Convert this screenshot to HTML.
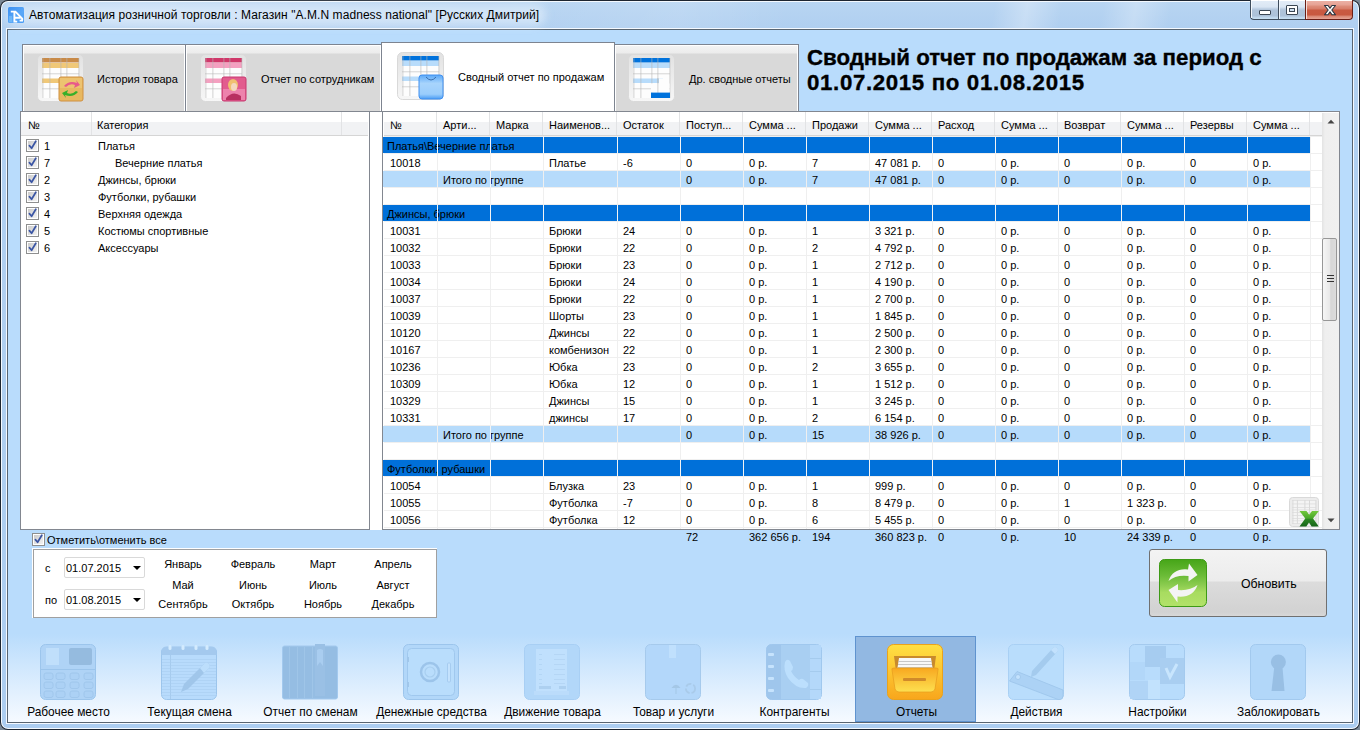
<!DOCTYPE html><html><head><meta charset="utf-8"><style>

*{margin:0;padding:0;box-sizing:border-box}
html,body{width:1360px;height:730px;overflow:hidden;background:#7a8896;font-family:"Liberation Sans", sans-serif;font-size:11px;color:#000}
.abs{position:absolute}
.t{position:absolute;white-space:nowrap;line-height:13px}
.tab{position:absolute;top:44px;height:68px;border:1px solid #7d8490;box-shadow:inset 1px 1px 0 #fff,inset -1px 0 0 #fff;background:linear-gradient(#f4f4f4 0,#ececec 8px,#d9d9d9 9px,#d9d9d9 100%)}
.tab.sel{top:42px;height:70px;background:#fff;box-shadow:none}
.tab .lbl{position:absolute;white-space:nowrap;font-size:11px;line-height:13px}
.ico{position:absolute;width:47px;height:48px}
.panel{position:absolute;background:#fff;border:1px solid #828790}
.hdr{position:absolute;height:24px;background:linear-gradient(#fff 0,#fff 10px,#f1f2f4 10px,#f1f2f4 100%);border-bottom:1px solid #d5d5d5}
.hsep{position:absolute;top:0px;width:1px;height:23px;background:#e2e3e5}
.cb{position:absolute;width:13px;height:13px}
.row{position:absolute;height:16px}
.cell{position:absolute;top:0;height:16px;line-height:18px;white-space:nowrap}
.gl{position:absolute;height:1px;background:#efefef}
.vl{position:absolute;width:1px;background:#efefef}
.tb{position:absolute;top:636px;width:121px;height:86px}
.tb .ic{position:absolute;left:32px;top:8px;width:56px;height:56px}
.tb .lb{position:absolute;left:0;width:121px;top:70px;text-align:center;white-space:nowrap;font-size:11.9px;line-height:13px}

</style></head><body>
<div class="abs" style="left:0;top:0;width:1360px;height:730px;border-radius:8px;background:#1d2530"></div>
<div class="abs" style="left:1px;top:1px;width:1358px;height:728px;border-radius:7px;background:#f4f9fe"></div>
<div class="abs" style="left:2px;top:2px;width:1356px;height:726px;border-radius:6px;background:linear-gradient(#b8d5f2,#b0cff0 26px,#b2d1f1 28px,#accdf0)"></div>
<div class="abs" style="left:6px;top:28px;width:1348px;height:696px;background:#f4f9ff"></div>
<div class="abs" style="left:7px;top:29px;width:1346px;height:694px;border:1px solid #586470;background:#b9dcfc"></div>
<div class="abs" style="left:2px;top:2px;width:1356px;height:26px;border-radius:6px 6px 0 0;background:linear-gradient(100deg,rgba(255,255,255,0) 0,rgba(255,255,255,.15) 10%,rgba(255,255,255,0) 35%,rgba(255,255,255,.12) 50%,rgba(255,255,255,0) 58%,rgba(255,255,255,0) 73%,rgba(255,255,255,.28) 75.4%,rgba(255,255,255,0) 78%,rgba(255,255,255,0) 81%,rgba(255,255,255,.25) 83.4%,rgba(255,255,255,0) 86%)"></div>
<div class="abs" style="left:6px;top:4px;width:540px;height:22px;border-radius:11px;background:rgba(228,240,252,.6);filter:blur(4px)"></div>
<div class="abs" style="left:8px;top:7px;width:16px;height:16px"><svg width="16" height="16" viewBox="0 0 16 16" style="position:absolute;left:0;top:0;"><defs><linearGradient id="apg" x1="0" y1="0" x2="1" y2="1"><stop offset="0" stop-color="#3c90f2"/><stop offset=".6" stop-color="#5aa8f8"/><stop offset="1" stop-color="#4a9cf4"/></linearGradient></defs><rect x="0" y="0" width="16" height="16" rx="1.5" fill="url(#apg)"/><rect x="1" y="9" width="3" height="6" fill="#7cc4fa" opacity=".6"/><path d="M2.8,4.6 H7.4 L14.2,11.6 V13.4 M6.4,4.8 V14.6 H9.2 M7.2,10.8 H12.6 M11.6,13.6 H15" fill="none" stroke="#fff" stroke-width="1.9" stroke-linejoin="miter"/></svg></div>
<div class="t" style="left:29px;top:8px;font-size:12px;line-height:14px;color:#000;letter-spacing:0.07px">Автоматизация розничной торговли : Магазин "A.M.N madness national" [Русских Дмитрий]</div>
<div class="abs" style="left:1250px;top:0px;width:56px;height:20px;border:1px solid #3f4d5c;border-top:none;border-right:none;border-radius:0 0 0 4px;background:linear-gradient(#ffffff 0,#ffffff 1px,#e2ecf7 1px,#dae6f3 7px,#c8d8ea 8px,#b0c4da 10px,#adc2d9 16px,#bcd4ea 17px,#c8e0f2 19px)"></div>
<div class="abs" style="left:1278px;top:0;width:1px;height:19px;background:#3f4d5c"></div>
<div class="abs" style="left:1279px;top:1px;width:1px;height:18px;background:#eef5fc"></div>
<div class="abs" style="left:1251px;top:1px;width:1px;height:17px;background:#f4f8fc"></div>
<div class="abs" style="left:1259px;top:10px;width:12px;height:5px;border:1px solid #3b4754;background:#fff;border-radius:1px"></div>
<div class="abs" style="left:1286px;top:5px;width:12px;height:10px;border:1px solid #3b4754;background:#fff;border-radius:1px"></div>
<div class="abs" style="left:1289px;top:8px;width:6px;height:4px;border:1px solid #3b4754;background:#cfe0f0"></div>
<div class="abs" style="left:1305px;top:0px;width:48px;height:20px;border:1px solid #6a1e16;border-top:none;border-radius:0 0 4px 0;background:linear-gradient(#ffffff 0,#ffffff 1px,#ecb0a4 1px,#e6a294 5px,#de8e7c 6px,#d77c68 9px,#c95a42 10px,#c85840 15px,#d88470 16px,#e6a496 19px)"></div>
<div class="abs" style="left:1306px;top:1px;width:1px;height:18px;background:#f6e0da"></div>
<div class="abs" style="left:1322px;top:3px;width:16px;height:14px"><svg width="16" height="14" viewBox="0 0 16 14" style="position:absolute;left:0;top:0;"><path d="M2.5,2.5 H6 L8,5.3 L10,2.5 H13.5 L9.8,7 L13.5,11.8 H10 L8,8.9 L6,11.8 H2.5 L6.2,7 Z" fill="#fff" stroke="#2a3642" stroke-width="1.1" stroke-linejoin="round"/></svg></div>
<div class="tab" style="left:22px;width:164px">
<div class="ico" style="left:14px;top:9px"><svg width="47" height="48" viewBox="0 0 47 48" style="position:absolute;left:0;top:0;"><defs><linearGradient id="tgc88a48" x1="0" y1="0" x2="0" y2="1"><stop offset="0" stop-color="#e2e2e2"/><stop offset="1" stop-color="#f7f7f7"/></linearGradient></defs><rect x="0.5" y="0.5" width="46" height="47" rx="5" fill="url(#tgc88a48)" stroke="#d9d9d9"/><rect x="5" y="4" width="37" height="40" fill="#fdfdfd"/><rect x="5" y="4" width="37" height="4.5" fill="#c88a48"/><rect x="5" y="9" width="37" height="5" fill="#f0c878"/><rect x="5" y="24.5" width="30" height="4.5" fill="#f0c878"/><rect x="5" y="19.5" width="37" height="0.7" fill="#c4c4c4"/><rect x="5" y="34.5" width="37" height="0.7" fill="#c4c4c4"/><rect x="5.5" y="4" width="0.8" height="40" fill="#b4b4b4" opacity="0.75"/><rect x="12.5" y="4" width="0.8" height="40" fill="#b4b4b4" opacity="0.75"/><rect x="23.5" y="4" width="0.8" height="40" fill="#b4b4b4" opacity="0.75"/><rect x="29.5" y="4" width="0.8" height="40" fill="#b4b4b4" opacity="0.75"/><rect x="41.5" y="4" width="0.8" height="40" fill="#b4b4b4" opacity="0.75"/><rect x="22" y="23" width="24" height="24" rx="2" fill="#e8b860" stroke="#d09040"/><rect x="23" y="24" width="22" height="10" fill="#f0c878" opacity=".7"/><path d="M27,32 Q32,26 40,29 L39,26 L43,31 L37,34 L38,31 Q33,29 29,33 Z" fill="#e85a8a"/><path d="M41,38 Q36,44 28,41 L29,44 L25,39 L31,36 L30,39 Q35,41 39,37 Z" fill="#38b02a"/></svg></div>
<div class="lbl" style="left:74px;top:28px">История товара</div>
</div>
<div class="tab" style="left:185px;width:197px">
<div class="ico" style="left:14px;top:9px"><svg width="47" height="48" viewBox="0 0 47 48" style="position:absolute;left:0;top:0;"><defs><linearGradient id="tgd0386a" x1="0" y1="0" x2="0" y2="1"><stop offset="0" stop-color="#e2e2e2"/><stop offset="1" stop-color="#f7f7f7"/></linearGradient></defs><rect x="0.5" y="0.5" width="46" height="47" rx="5" fill="url(#tgd0386a)" stroke="#d9d9d9"/><rect x="5" y="4" width="37" height="40" fill="#fdfdfd"/><rect x="5" y="4" width="37" height="4.5" fill="#d0386a"/><rect x="5" y="9" width="37" height="5" fill="#f4a0c0"/><rect x="5" y="24.5" width="30" height="4.5" fill="#f4a0c0"/><rect x="5" y="19.5" width="37" height="0.7" fill="#c4c4c4"/><rect x="5" y="34.5" width="37" height="0.7" fill="#c4c4c4"/><rect x="5.5" y="4" width="0.8" height="40" fill="#b4b4b4" opacity="0.75"/><rect x="12.5" y="4" width="0.8" height="40" fill="#b4b4b4" opacity="0.75"/><rect x="23.5" y="4" width="0.8" height="40" fill="#b4b4b4" opacity="0.75"/><rect x="29.5" y="4" width="0.8" height="40" fill="#b4b4b4" opacity="0.75"/><rect x="41.5" y="4" width="0.8" height="40" fill="#b4b4b4" opacity="0.75"/><rect x="22" y="23" width="24" height="24" rx="2" fill="#e25c8e" stroke="#c83870"/><rect x="23" y="35" width="22" height="11" fill="#f08cb4" opacity=".8"/><ellipse cx="33" cy="31" rx="5" ry="6" fill="#f0c070"/><ellipse cx="34" cy="33" rx="3" ry="4" fill="#f4d8c0"/><path d="M26,44 Q33,36 41,42 L41,46 L26,46 Z" fill="#b83060"/></svg></div>
<div class="lbl" style="left:75px;top:28px">Отчет по сотрудникам</div>
</div>
<div class="tab" style="left:614px;width:185px">
<div class="ico" style="left:13px;top:9px"><svg width="47" height="48" viewBox="0 0 47 48" style="position:absolute;left:0;top:0;"><defs><linearGradient id="tg0072dc" x1="0" y1="0" x2="0" y2="1"><stop offset="0" stop-color="#e2e2e2"/><stop offset="1" stop-color="#f7f7f7"/></linearGradient></defs><rect x="0.5" y="0.5" width="46" height="47" rx="5" fill="url(#tg0072dc)" stroke="#d9d9d9"/><rect x="5" y="4" width="37" height="40" fill="#fdfdfd"/><rect x="5" y="4" width="37" height="4.5" fill="#0072dc"/><rect x="5" y="9" width="37" height="5" fill="#b8dcfb"/><rect x="5" y="24.5" width="30" height="4.5" fill="#b8dcfb"/><rect x="5" y="19.5" width="37" height="0.7" fill="#c4c4c4"/><rect x="5" y="34.5" width="37" height="0.7" fill="#c4c4c4"/><rect x="5.5" y="4" width="0.8" height="40" fill="#b4b4b4" opacity="0.75"/><rect x="12.5" y="4" width="0.8" height="40" fill="#b4b4b4" opacity="0.75"/><rect x="23.5" y="4" width="0.8" height="40" fill="#b4b4b4" opacity="0.75"/><rect x="29.5" y="4" width="0.8" height="40" fill="#b4b4b4" opacity="0.75"/><rect x="41.5" y="4" width="0.8" height="40" fill="#b4b4b4" opacity="0.75"/><rect x="31" y="24.5" width="4" height="4.5" fill="#fdfdfd"/><rect x="29.5" y="24" width=".8" height="6" fill="#b4b4b4" opacity=".75"/><rect x="23" y="29.5" width="18.5" height="9" fill="#fdfdfd"/><rect x="29.5" y="29.5" width=".8" height="9" fill="#b4b4b4" opacity=".75"/><rect x="23" y="38.6" width="19" height="5.4" fill="#0072dc"/></svg></div>
<div class="lbl" style="left:74px;top:28px">Др. сводные отчеты</div>
</div>
<div class="tab sel" style="left:381px;width:234px">
<div class="ico" style="left:15px;top:9px"><svg width="47" height="48" viewBox="0 0 47 48" style="position:absolute;left:0;top:0;"><defs><linearGradient id="tg0072dc" x1="0" y1="0" x2="0" y2="1"><stop offset="0" stop-color="#e2e2e2"/><stop offset="1" stop-color="#f7f7f7"/></linearGradient></defs><rect x="0.5" y="0.5" width="46" height="47" rx="5" fill="url(#tg0072dc)" stroke="#d9d9d9"/><rect x="5" y="4" width="37" height="40" fill="#fdfdfd"/><rect x="5" y="4" width="37" height="4.5" fill="#0072dc"/><rect x="5" y="9" width="37" height="5" fill="#b8dcfb"/><rect x="5" y="24.5" width="30" height="4.5" fill="#b8dcfb"/><rect x="5" y="19.5" width="37" height="0.7" fill="#c4c4c4"/><rect x="5" y="34.5" width="37" height="0.7" fill="#c4c4c4"/><rect x="5.5" y="4" width="0.8" height="40" fill="#b4b4b4" opacity="0.75"/><rect x="12.5" y="4" width="0.8" height="40" fill="#b4b4b4" opacity="0.75"/><rect x="23.5" y="4" width="0.8" height="40" fill="#b4b4b4" opacity="0.75"/><rect x="29.5" y="4" width="0.8" height="40" fill="#b4b4b4" opacity="0.75"/><rect x="41.5" y="4" width="0.8" height="40" fill="#b4b4b4" opacity="0.75"/><defs><linearGradient id="bg1" x1="0" y1="0" x2="0" y2="1"><stop offset="0" stop-color="#5aa8f8"/><stop offset=".35" stop-color="#a8d4fc"/><stop offset=".8" stop-color="#9acdfc"/><stop offset="1" stop-color="#4a9cf4"/></linearGradient></defs><rect x="22" y="23" width="24" height="24" rx="3" fill="url(#bg1)" stroke="#4090f0"/><path d="M29,25 Q34,31 39,25" fill="none" stroke="#2a5c9c" stroke-width="0.8"/></svg></div>
<div class="lbl" style="left:76px;top:28px">Сводный отчет по продажам</div>
</div>
<div class="t" style="left:807px;top:45px;font-size:22.25px;font-weight:bold;line-height:25px;-webkit-text-stroke:0.35px #000">Сводный отчет по продажам за период с<br><span style="letter-spacing:0.65px">01.07.2015 по 01.08.2015</span></div>
<div class="panel" style="left:20px;top:111px;width:350px;height:419px">
<div class="hdr" style="left:0;top:0;width:347px"></div>
<div class="hsep" style="left:70px"></div><div class="hsep" style="left:320px"></div>
<div class="t" style="left:7px;top:7px">№</div><div class="t" style="left:76px;top:7px">Категория</div>
<div class="cb" style="left:5px;top:27px"><svg width="13" height="13" viewBox="0 0 13 13" style="position:absolute;left:0;top:0;"><rect x="0.5" y="0.5" width="12" height="12" fill="#fff" stroke="#8e8f8f"/><defs><linearGradient id="cbg" x1="0" y1="0" x2="1" y2="1"><stop offset="0" stop-color="#cbcbcb"/><stop offset="1" stop-color="#f3f3f3"/></linearGradient></defs><rect x="2" y="2" width="9" height="9" fill="url(#cbg)"/><path d="M3.4,6.6 L5.6,9.3 L9.8,2.2" fill="none" stroke="#3a55a4" stroke-width="1.7" stroke-linejoin="round" stroke-linecap="round"/></svg></div>
<div class="t" style="left:23px;top:28px">1</div>
<div class="t" style="left:77px;top:28px">Платья</div>
<div class="cb" style="left:5px;top:44px"><svg width="13" height="13" viewBox="0 0 13 13" style="position:absolute;left:0;top:0;"><rect x="0.5" y="0.5" width="12" height="12" fill="#fff" stroke="#8e8f8f"/><defs><linearGradient id="cbg" x1="0" y1="0" x2="1" y2="1"><stop offset="0" stop-color="#cbcbcb"/><stop offset="1" stop-color="#f3f3f3"/></linearGradient></defs><rect x="2" y="2" width="9" height="9" fill="url(#cbg)"/><path d="M3.4,6.6 L5.6,9.3 L9.8,2.2" fill="none" stroke="#3a55a4" stroke-width="1.7" stroke-linejoin="round" stroke-linecap="round"/></svg></div>
<div class="t" style="left:23px;top:45px">7</div>
<div class="t" style="left:94px;top:45px">Вечерние платья</div>
<div class="cb" style="left:5px;top:61px"><svg width="13" height="13" viewBox="0 0 13 13" style="position:absolute;left:0;top:0;"><rect x="0.5" y="0.5" width="12" height="12" fill="#fff" stroke="#8e8f8f"/><defs><linearGradient id="cbg" x1="0" y1="0" x2="1" y2="1"><stop offset="0" stop-color="#cbcbcb"/><stop offset="1" stop-color="#f3f3f3"/></linearGradient></defs><rect x="2" y="2" width="9" height="9" fill="url(#cbg)"/><path d="M3.4,6.6 L5.6,9.3 L9.8,2.2" fill="none" stroke="#3a55a4" stroke-width="1.7" stroke-linejoin="round" stroke-linecap="round"/></svg></div>
<div class="t" style="left:23px;top:62px">2</div>
<div class="t" style="left:77px;top:62px">Джинсы, брюки</div>
<div class="cb" style="left:5px;top:78px"><svg width="13" height="13" viewBox="0 0 13 13" style="position:absolute;left:0;top:0;"><rect x="0.5" y="0.5" width="12" height="12" fill="#fff" stroke="#8e8f8f"/><defs><linearGradient id="cbg" x1="0" y1="0" x2="1" y2="1"><stop offset="0" stop-color="#cbcbcb"/><stop offset="1" stop-color="#f3f3f3"/></linearGradient></defs><rect x="2" y="2" width="9" height="9" fill="url(#cbg)"/><path d="M3.4,6.6 L5.6,9.3 L9.8,2.2" fill="none" stroke="#3a55a4" stroke-width="1.7" stroke-linejoin="round" stroke-linecap="round"/></svg></div>
<div class="t" style="left:23px;top:79px">3</div>
<div class="t" style="left:77px;top:79px">Футболки, рубашки</div>
<div class="cb" style="left:5px;top:95px"><svg width="13" height="13" viewBox="0 0 13 13" style="position:absolute;left:0;top:0;"><rect x="0.5" y="0.5" width="12" height="12" fill="#fff" stroke="#8e8f8f"/><defs><linearGradient id="cbg" x1="0" y1="0" x2="1" y2="1"><stop offset="0" stop-color="#cbcbcb"/><stop offset="1" stop-color="#f3f3f3"/></linearGradient></defs><rect x="2" y="2" width="9" height="9" fill="url(#cbg)"/><path d="M3.4,6.6 L5.6,9.3 L9.8,2.2" fill="none" stroke="#3a55a4" stroke-width="1.7" stroke-linejoin="round" stroke-linecap="round"/></svg></div>
<div class="t" style="left:23px;top:96px">4</div>
<div class="t" style="left:77px;top:96px">Верхняя одежда</div>
<div class="cb" style="left:5px;top:112px"><svg width="13" height="13" viewBox="0 0 13 13" style="position:absolute;left:0;top:0;"><rect x="0.5" y="0.5" width="12" height="12" fill="#fff" stroke="#8e8f8f"/><defs><linearGradient id="cbg" x1="0" y1="0" x2="1" y2="1"><stop offset="0" stop-color="#cbcbcb"/><stop offset="1" stop-color="#f3f3f3"/></linearGradient></defs><rect x="2" y="2" width="9" height="9" fill="url(#cbg)"/><path d="M3.4,6.6 L5.6,9.3 L9.8,2.2" fill="none" stroke="#3a55a4" stroke-width="1.7" stroke-linejoin="round" stroke-linecap="round"/></svg></div>
<div class="t" style="left:23px;top:113px">5</div>
<div class="t" style="left:77px;top:113px">Костюмы спортивные</div>
<div class="cb" style="left:5px;top:129px"><svg width="13" height="13" viewBox="0 0 13 13" style="position:absolute;left:0;top:0;"><rect x="0.5" y="0.5" width="12" height="12" fill="#fff" stroke="#8e8f8f"/><defs><linearGradient id="cbg" x1="0" y1="0" x2="1" y2="1"><stop offset="0" stop-color="#cbcbcb"/><stop offset="1" stop-color="#f3f3f3"/></linearGradient></defs><rect x="2" y="2" width="9" height="9" fill="url(#cbg)"/><path d="M3.4,6.6 L5.6,9.3 L9.8,2.2" fill="none" stroke="#3a55a4" stroke-width="1.7" stroke-linejoin="round" stroke-linecap="round"/></svg></div>
<div class="t" style="left:23px;top:130px">6</div>
<div class="t" style="left:77px;top:130px">Аксессуары</div>
</div>
<div class="abs" style="left:370px;top:111px;width:12px;height:419px;background:#fff;border-top:1px solid #828790"></div>
<div class="panel" style="left:382px;top:111px;width:958px;height:419px;overflow:hidden">
<div class="hdr" style="left:1px;top:0;width:938px"></div>
<div class="hsep" style="left:53px"></div>
<div class="hsep" style="left:106px"></div>
<div class="hsep" style="left:159px"></div>
<div class="hsep" style="left:233px"></div>
<div class="hsep" style="left:296px"></div>
<div class="hsep" style="left:359px"></div>
<div class="hsep" style="left:422px"></div>
<div class="hsep" style="left:485px"></div>
<div class="hsep" style="left:548px"></div>
<div class="hsep" style="left:611px"></div>
<div class="hsep" style="left:674px"></div>
<div class="hsep" style="left:737px"></div>
<div class="hsep" style="left:800px"></div>
<div class="hsep" style="left:863px"></div>
<div class="hsep" style="left:926px"></div>
<div class="t" style="left:7px;top:7px">№</div>
<div class="t" style="left:60px;top:7px">Арти...</div>
<div class="t" style="left:113px;top:7px">Марка</div>
<div class="t" style="left:166px;top:7px">Наименов...</div>
<div class="t" style="left:240px;top:7px">Остаток</div>
<div class="t" style="left:303px;top:7px">Поступ...</div>
<div class="t" style="left:366px;top:7px">Сумма ...</div>
<div class="t" style="left:429px;top:7px">Продажи</div>
<div class="t" style="left:492px;top:7px">Сумма ...</div>
<div class="t" style="left:555px;top:7px">Расход</div>
<div class="t" style="left:618px;top:7px">Сумма ...</div>
<div class="t" style="left:681px;top:7px">Возврат</div>
<div class="t" style="left:744px;top:7px">Сумма ...</div>
<div class="t" style="left:807px;top:7px">Резервы</div>
<div class="t" style="left:870px;top:7px">Сумма ...</div>
<div class="gl" style="left:1px;top:24px;width:938px"></div>
<div class="gl" style="left:1px;top:41px;width:938px"></div>
<div class="gl" style="left:1px;top:58px;width:938px"></div>
<div class="gl" style="left:1px;top:75px;width:938px"></div>
<div class="gl" style="left:1px;top:92px;width:938px"></div>
<div class="gl" style="left:1px;top:109px;width:938px"></div>
<div class="gl" style="left:1px;top:126px;width:938px"></div>
<div class="gl" style="left:1px;top:143px;width:938px"></div>
<div class="gl" style="left:1px;top:160px;width:938px"></div>
<div class="gl" style="left:1px;top:177px;width:938px"></div>
<div class="gl" style="left:1px;top:194px;width:938px"></div>
<div class="gl" style="left:1px;top:211px;width:938px"></div>
<div class="gl" style="left:1px;top:228px;width:938px"></div>
<div class="gl" style="left:1px;top:245px;width:938px"></div>
<div class="gl" style="left:1px;top:262px;width:938px"></div>
<div class="gl" style="left:1px;top:279px;width:938px"></div>
<div class="gl" style="left:1px;top:296px;width:938px"></div>
<div class="gl" style="left:1px;top:313px;width:938px"></div>
<div class="gl" style="left:1px;top:330px;width:938px"></div>
<div class="gl" style="left:1px;top:347px;width:938px"></div>
<div class="gl" style="left:1px;top:364px;width:938px"></div>
<div class="gl" style="left:1px;top:381px;width:938px"></div>
<div class="gl" style="left:1px;top:398px;width:938px"></div>
<div class="gl" style="left:1px;top:415px;width:938px"></div>
<div class="vl" style="left:54px;top:24px;height:400px"></div>
<div class="vl" style="left:107px;top:24px;height:400px"></div>
<div class="vl" style="left:160px;top:24px;height:400px"></div>
<div class="vl" style="left:234px;top:24px;height:400px"></div>
<div class="vl" style="left:297px;top:24px;height:400px"></div>
<div class="vl" style="left:360px;top:24px;height:400px"></div>
<div class="vl" style="left:423px;top:24px;height:400px"></div>
<div class="vl" style="left:486px;top:24px;height:400px"></div>
<div class="vl" style="left:549px;top:24px;height:400px"></div>
<div class="vl" style="left:612px;top:24px;height:400px"></div>
<div class="vl" style="left:675px;top:24px;height:400px"></div>
<div class="vl" style="left:738px;top:24px;height:400px"></div>
<div class="vl" style="left:801px;top:24px;height:400px"></div>
<div class="vl" style="left:864px;top:24px;height:400px"></div>
<div class="vl" style="left:927px;top:24px;height:400px"></div>
<div class="row" style="left:0px;top:25px;width:54px;background:#0070d9"></div>
<div class="row" style="left:55px;top:25px;width:52px;background:#0070d9"></div>
<div class="row" style="left:108px;top:25px;width:52px;background:#0070d9"></div>
<div class="row" style="left:161px;top:25px;width:73px;background:#0070d9"></div>
<div class="row" style="left:235px;top:25px;width:62px;background:#0070d9"></div>
<div class="row" style="left:298px;top:25px;width:62px;background:#0070d9"></div>
<div class="row" style="left:361px;top:25px;width:62px;background:#0070d9"></div>
<div class="row" style="left:424px;top:25px;width:62px;background:#0070d9"></div>
<div class="row" style="left:487px;top:25px;width:62px;background:#0070d9"></div>
<div class="row" style="left:550px;top:25px;width:62px;background:#0070d9"></div>
<div class="row" style="left:613px;top:25px;width:62px;background:#0070d9"></div>
<div class="row" style="left:676px;top:25px;width:62px;background:#0070d9"></div>
<div class="row" style="left:739px;top:25px;width:62px;background:#0070d9"></div>
<div class="row" style="left:802px;top:25px;width:62px;background:#0070d9"></div>
<div class="row" style="left:865px;top:25px;width:62px;background:#0070d9"></div>
<div class="cell" style="left:4px;top:25px">Платья\Вечерние платья</div>
<div class="abs" style="left:54px;top:25px;width:1px;height:16px;background:#f4f4f4"></div>
<div class="abs" style="left:107px;top:25px;width:1px;height:16px;background:#f4f4f4"></div>
<div class="abs" style="left:160px;top:25px;width:1px;height:16px;background:#f4f4f4"></div>
<div class="abs" style="left:234px;top:25px;width:1px;height:16px;background:#f4f4f4"></div>
<div class="abs" style="left:297px;top:25px;width:1px;height:16px;background:#f4f4f4"></div>
<div class="abs" style="left:360px;top:25px;width:1px;height:16px;background:#f4f4f4"></div>
<div class="abs" style="left:423px;top:25px;width:1px;height:16px;background:#f4f4f4"></div>
<div class="abs" style="left:486px;top:25px;width:1px;height:16px;background:#f4f4f4"></div>
<div class="abs" style="left:549px;top:25px;width:1px;height:16px;background:#f4f4f4"></div>
<div class="abs" style="left:612px;top:25px;width:1px;height:16px;background:#f4f4f4"></div>
<div class="abs" style="left:675px;top:25px;width:1px;height:16px;background:#f4f4f4"></div>
<div class="abs" style="left:738px;top:25px;width:1px;height:16px;background:#f4f4f4"></div>
<div class="abs" style="left:801px;top:25px;width:1px;height:16px;background:#f4f4f4"></div>
<div class="abs" style="left:864px;top:25px;width:1px;height:16px;background:#f4f4f4"></div>
<div class="cell" style="left:7px;top:42px">10018</div>
<div class="cell" style="left:166px;top:42px">Платье</div>
<div class="cell" style="left:240px;top:42px">-6</div>
<div class="cell" style="left:303px;top:42px">0</div>
<div class="cell" style="left:366px;top:42px">0 р.</div>
<div class="cell" style="left:429px;top:42px">7</div>
<div class="cell" style="left:492px;top:42px">47 081 р.</div>
<div class="cell" style="left:555px;top:42px">0</div>
<div class="cell" style="left:618px;top:42px">0 р.</div>
<div class="cell" style="left:681px;top:42px">0</div>
<div class="cell" style="left:744px;top:42px">0 р.</div>
<div class="cell" style="left:807px;top:42px">0</div>
<div class="cell" style="left:870px;top:42px">0 р.</div>
<div class="row" style="left:0px;top:59px;width:54px;background:#b6dbfb"></div>
<div class="row" style="left:55px;top:59px;width:52px;background:#b6dbfb"></div>
<div class="row" style="left:108px;top:59px;width:52px;background:#b6dbfb"></div>
<div class="row" style="left:161px;top:59px;width:73px;background:#b6dbfb"></div>
<div class="row" style="left:235px;top:59px;width:62px;background:#b6dbfb"></div>
<div class="row" style="left:298px;top:59px;width:62px;background:#b6dbfb"></div>
<div class="row" style="left:361px;top:59px;width:62px;background:#b6dbfb"></div>
<div class="row" style="left:424px;top:59px;width:62px;background:#b6dbfb"></div>
<div class="row" style="left:487px;top:59px;width:62px;background:#b6dbfb"></div>
<div class="row" style="left:550px;top:59px;width:62px;background:#b6dbfb"></div>
<div class="row" style="left:613px;top:59px;width:62px;background:#b6dbfb"></div>
<div class="row" style="left:676px;top:59px;width:62px;background:#b6dbfb"></div>
<div class="row" style="left:739px;top:59px;width:62px;background:#b6dbfb"></div>
<div class="row" style="left:802px;top:59px;width:62px;background:#b6dbfb"></div>
<div class="row" style="left:865px;top:59px;width:62px;background:#b6dbfb"></div>
<div class="cell" style="left:60px;top:59px">Итого по группе</div>
<div class="cell" style="left:303px;top:59px">0</div>
<div class="cell" style="left:366px;top:59px">0 р.</div>
<div class="cell" style="left:429px;top:59px">7</div>
<div class="cell" style="left:492px;top:59px">47 081 р.</div>
<div class="cell" style="left:555px;top:59px">0</div>
<div class="cell" style="left:618px;top:59px">0 р.</div>
<div class="cell" style="left:681px;top:59px">0</div>
<div class="cell" style="left:744px;top:59px">0 р.</div>
<div class="cell" style="left:807px;top:59px">0</div>
<div class="cell" style="left:870px;top:59px">0 р.</div>
<div class="abs" style="left:107px;top:59px;width:1px;height:16px;background:#f4f4f4"></div>
<div class="row" style="left:0px;top:93px;width:54px;background:#0070d9"></div>
<div class="row" style="left:55px;top:93px;width:52px;background:#0070d9"></div>
<div class="row" style="left:108px;top:93px;width:52px;background:#0070d9"></div>
<div class="row" style="left:161px;top:93px;width:73px;background:#0070d9"></div>
<div class="row" style="left:235px;top:93px;width:62px;background:#0070d9"></div>
<div class="row" style="left:298px;top:93px;width:62px;background:#0070d9"></div>
<div class="row" style="left:361px;top:93px;width:62px;background:#0070d9"></div>
<div class="row" style="left:424px;top:93px;width:62px;background:#0070d9"></div>
<div class="row" style="left:487px;top:93px;width:62px;background:#0070d9"></div>
<div class="row" style="left:550px;top:93px;width:62px;background:#0070d9"></div>
<div class="row" style="left:613px;top:93px;width:62px;background:#0070d9"></div>
<div class="row" style="left:676px;top:93px;width:62px;background:#0070d9"></div>
<div class="row" style="left:739px;top:93px;width:62px;background:#0070d9"></div>
<div class="row" style="left:802px;top:93px;width:62px;background:#0070d9"></div>
<div class="row" style="left:865px;top:93px;width:62px;background:#0070d9"></div>
<div class="cell" style="left:4px;top:93px">Джинсы, брюки</div>
<div class="abs" style="left:54px;top:93px;width:1px;height:16px;background:#f4f4f4"></div>
<div class="abs" style="left:107px;top:93px;width:1px;height:16px;background:#f4f4f4"></div>
<div class="abs" style="left:160px;top:93px;width:1px;height:16px;background:#f4f4f4"></div>
<div class="abs" style="left:234px;top:93px;width:1px;height:16px;background:#f4f4f4"></div>
<div class="abs" style="left:297px;top:93px;width:1px;height:16px;background:#f4f4f4"></div>
<div class="abs" style="left:360px;top:93px;width:1px;height:16px;background:#f4f4f4"></div>
<div class="abs" style="left:423px;top:93px;width:1px;height:16px;background:#f4f4f4"></div>
<div class="abs" style="left:486px;top:93px;width:1px;height:16px;background:#f4f4f4"></div>
<div class="abs" style="left:549px;top:93px;width:1px;height:16px;background:#f4f4f4"></div>
<div class="abs" style="left:612px;top:93px;width:1px;height:16px;background:#f4f4f4"></div>
<div class="abs" style="left:675px;top:93px;width:1px;height:16px;background:#f4f4f4"></div>
<div class="abs" style="left:738px;top:93px;width:1px;height:16px;background:#f4f4f4"></div>
<div class="abs" style="left:801px;top:93px;width:1px;height:16px;background:#f4f4f4"></div>
<div class="abs" style="left:864px;top:93px;width:1px;height:16px;background:#f4f4f4"></div>
<div class="cell" style="left:7px;top:110px">10031</div>
<div class="cell" style="left:166px;top:110px">Брюки</div>
<div class="cell" style="left:240px;top:110px">24</div>
<div class="cell" style="left:303px;top:110px">0</div>
<div class="cell" style="left:366px;top:110px">0 р.</div>
<div class="cell" style="left:429px;top:110px">1</div>
<div class="cell" style="left:492px;top:110px">3 321 р.</div>
<div class="cell" style="left:555px;top:110px">0</div>
<div class="cell" style="left:618px;top:110px">0 р.</div>
<div class="cell" style="left:681px;top:110px">0</div>
<div class="cell" style="left:744px;top:110px">0 р.</div>
<div class="cell" style="left:807px;top:110px">0</div>
<div class="cell" style="left:870px;top:110px">0 р.</div>
<div class="cell" style="left:7px;top:127px">10032</div>
<div class="cell" style="left:166px;top:127px">Брюки</div>
<div class="cell" style="left:240px;top:127px">22</div>
<div class="cell" style="left:303px;top:127px">0</div>
<div class="cell" style="left:366px;top:127px">0 р.</div>
<div class="cell" style="left:429px;top:127px">2</div>
<div class="cell" style="left:492px;top:127px">4 792 р.</div>
<div class="cell" style="left:555px;top:127px">0</div>
<div class="cell" style="left:618px;top:127px">0 р.</div>
<div class="cell" style="left:681px;top:127px">0</div>
<div class="cell" style="left:744px;top:127px">0 р.</div>
<div class="cell" style="left:807px;top:127px">0</div>
<div class="cell" style="left:870px;top:127px">0 р.</div>
<div class="cell" style="left:7px;top:144px">10033</div>
<div class="cell" style="left:166px;top:144px">Брюки</div>
<div class="cell" style="left:240px;top:144px">23</div>
<div class="cell" style="left:303px;top:144px">0</div>
<div class="cell" style="left:366px;top:144px">0 р.</div>
<div class="cell" style="left:429px;top:144px">1</div>
<div class="cell" style="left:492px;top:144px">2 712 р.</div>
<div class="cell" style="left:555px;top:144px">0</div>
<div class="cell" style="left:618px;top:144px">0 р.</div>
<div class="cell" style="left:681px;top:144px">0</div>
<div class="cell" style="left:744px;top:144px">0 р.</div>
<div class="cell" style="left:807px;top:144px">0</div>
<div class="cell" style="left:870px;top:144px">0 р.</div>
<div class="cell" style="left:7px;top:161px">10034</div>
<div class="cell" style="left:166px;top:161px">Брюки</div>
<div class="cell" style="left:240px;top:161px">24</div>
<div class="cell" style="left:303px;top:161px">0</div>
<div class="cell" style="left:366px;top:161px">0 р.</div>
<div class="cell" style="left:429px;top:161px">1</div>
<div class="cell" style="left:492px;top:161px">4 190 р.</div>
<div class="cell" style="left:555px;top:161px">0</div>
<div class="cell" style="left:618px;top:161px">0 р.</div>
<div class="cell" style="left:681px;top:161px">0</div>
<div class="cell" style="left:744px;top:161px">0 р.</div>
<div class="cell" style="left:807px;top:161px">0</div>
<div class="cell" style="left:870px;top:161px">0 р.</div>
<div class="cell" style="left:7px;top:178px">10037</div>
<div class="cell" style="left:166px;top:178px">Брюки</div>
<div class="cell" style="left:240px;top:178px">22</div>
<div class="cell" style="left:303px;top:178px">0</div>
<div class="cell" style="left:366px;top:178px">0 р.</div>
<div class="cell" style="left:429px;top:178px">1</div>
<div class="cell" style="left:492px;top:178px">2 700 р.</div>
<div class="cell" style="left:555px;top:178px">0</div>
<div class="cell" style="left:618px;top:178px">0 р.</div>
<div class="cell" style="left:681px;top:178px">0</div>
<div class="cell" style="left:744px;top:178px">0 р.</div>
<div class="cell" style="left:807px;top:178px">0</div>
<div class="cell" style="left:870px;top:178px">0 р.</div>
<div class="cell" style="left:7px;top:195px">10039</div>
<div class="cell" style="left:166px;top:195px">Шорты</div>
<div class="cell" style="left:240px;top:195px">23</div>
<div class="cell" style="left:303px;top:195px">0</div>
<div class="cell" style="left:366px;top:195px">0 р.</div>
<div class="cell" style="left:429px;top:195px">1</div>
<div class="cell" style="left:492px;top:195px">1 845 р.</div>
<div class="cell" style="left:555px;top:195px">0</div>
<div class="cell" style="left:618px;top:195px">0 р.</div>
<div class="cell" style="left:681px;top:195px">0</div>
<div class="cell" style="left:744px;top:195px">0 р.</div>
<div class="cell" style="left:807px;top:195px">0</div>
<div class="cell" style="left:870px;top:195px">0 р.</div>
<div class="cell" style="left:7px;top:212px">10120</div>
<div class="cell" style="left:166px;top:212px">Джинсы</div>
<div class="cell" style="left:240px;top:212px">22</div>
<div class="cell" style="left:303px;top:212px">0</div>
<div class="cell" style="left:366px;top:212px">0 р.</div>
<div class="cell" style="left:429px;top:212px">1</div>
<div class="cell" style="left:492px;top:212px">2 500 р.</div>
<div class="cell" style="left:555px;top:212px">0</div>
<div class="cell" style="left:618px;top:212px">0 р.</div>
<div class="cell" style="left:681px;top:212px">0</div>
<div class="cell" style="left:744px;top:212px">0 р.</div>
<div class="cell" style="left:807px;top:212px">0</div>
<div class="cell" style="left:870px;top:212px">0 р.</div>
<div class="cell" style="left:7px;top:229px">10167</div>
<div class="cell" style="left:166px;top:229px">комбенизон</div>
<div class="cell" style="left:240px;top:229px">22</div>
<div class="cell" style="left:303px;top:229px">0</div>
<div class="cell" style="left:366px;top:229px">0 р.</div>
<div class="cell" style="left:429px;top:229px">1</div>
<div class="cell" style="left:492px;top:229px">2 300 р.</div>
<div class="cell" style="left:555px;top:229px">0</div>
<div class="cell" style="left:618px;top:229px">0 р.</div>
<div class="cell" style="left:681px;top:229px">0</div>
<div class="cell" style="left:744px;top:229px">0 р.</div>
<div class="cell" style="left:807px;top:229px">0</div>
<div class="cell" style="left:870px;top:229px">0 р.</div>
<div class="cell" style="left:7px;top:246px">10236</div>
<div class="cell" style="left:166px;top:246px">Юбка</div>
<div class="cell" style="left:240px;top:246px">23</div>
<div class="cell" style="left:303px;top:246px">0</div>
<div class="cell" style="left:366px;top:246px">0 р.</div>
<div class="cell" style="left:429px;top:246px">2</div>
<div class="cell" style="left:492px;top:246px">3 655 р.</div>
<div class="cell" style="left:555px;top:246px">0</div>
<div class="cell" style="left:618px;top:246px">0 р.</div>
<div class="cell" style="left:681px;top:246px">0</div>
<div class="cell" style="left:744px;top:246px">0 р.</div>
<div class="cell" style="left:807px;top:246px">0</div>
<div class="cell" style="left:870px;top:246px">0 р.</div>
<div class="cell" style="left:7px;top:263px">10309</div>
<div class="cell" style="left:166px;top:263px">Юбка</div>
<div class="cell" style="left:240px;top:263px">12</div>
<div class="cell" style="left:303px;top:263px">0</div>
<div class="cell" style="left:366px;top:263px">0 р.</div>
<div class="cell" style="left:429px;top:263px">1</div>
<div class="cell" style="left:492px;top:263px">1 512 р.</div>
<div class="cell" style="left:555px;top:263px">0</div>
<div class="cell" style="left:618px;top:263px">0 р.</div>
<div class="cell" style="left:681px;top:263px">0</div>
<div class="cell" style="left:744px;top:263px">0 р.</div>
<div class="cell" style="left:807px;top:263px">0</div>
<div class="cell" style="left:870px;top:263px">0 р.</div>
<div class="cell" style="left:7px;top:280px">10329</div>
<div class="cell" style="left:166px;top:280px">Джинсы</div>
<div class="cell" style="left:240px;top:280px">15</div>
<div class="cell" style="left:303px;top:280px">0</div>
<div class="cell" style="left:366px;top:280px">0 р.</div>
<div class="cell" style="left:429px;top:280px">1</div>
<div class="cell" style="left:492px;top:280px">3 245 р.</div>
<div class="cell" style="left:555px;top:280px">0</div>
<div class="cell" style="left:618px;top:280px">0 р.</div>
<div class="cell" style="left:681px;top:280px">0</div>
<div class="cell" style="left:744px;top:280px">0 р.</div>
<div class="cell" style="left:807px;top:280px">0</div>
<div class="cell" style="left:870px;top:280px">0 р.</div>
<div class="cell" style="left:7px;top:297px">10331</div>
<div class="cell" style="left:166px;top:297px">джинсы</div>
<div class="cell" style="left:240px;top:297px">17</div>
<div class="cell" style="left:303px;top:297px">0</div>
<div class="cell" style="left:366px;top:297px">0 р.</div>
<div class="cell" style="left:429px;top:297px">2</div>
<div class="cell" style="left:492px;top:297px">6 154 р.</div>
<div class="cell" style="left:555px;top:297px">0</div>
<div class="cell" style="left:618px;top:297px">0 р.</div>
<div class="cell" style="left:681px;top:297px">0</div>
<div class="cell" style="left:744px;top:297px">0 р.</div>
<div class="cell" style="left:807px;top:297px">0</div>
<div class="cell" style="left:870px;top:297px">0 р.</div>
<div class="row" style="left:0px;top:314px;width:54px;background:#b6dbfb"></div>
<div class="row" style="left:55px;top:314px;width:52px;background:#b6dbfb"></div>
<div class="row" style="left:108px;top:314px;width:52px;background:#b6dbfb"></div>
<div class="row" style="left:161px;top:314px;width:73px;background:#b6dbfb"></div>
<div class="row" style="left:235px;top:314px;width:62px;background:#b6dbfb"></div>
<div class="row" style="left:298px;top:314px;width:62px;background:#b6dbfb"></div>
<div class="row" style="left:361px;top:314px;width:62px;background:#b6dbfb"></div>
<div class="row" style="left:424px;top:314px;width:62px;background:#b6dbfb"></div>
<div class="row" style="left:487px;top:314px;width:62px;background:#b6dbfb"></div>
<div class="row" style="left:550px;top:314px;width:62px;background:#b6dbfb"></div>
<div class="row" style="left:613px;top:314px;width:62px;background:#b6dbfb"></div>
<div class="row" style="left:676px;top:314px;width:62px;background:#b6dbfb"></div>
<div class="row" style="left:739px;top:314px;width:62px;background:#b6dbfb"></div>
<div class="row" style="left:802px;top:314px;width:62px;background:#b6dbfb"></div>
<div class="row" style="left:865px;top:314px;width:62px;background:#b6dbfb"></div>
<div class="cell" style="left:60px;top:314px">Итого по группе</div>
<div class="cell" style="left:303px;top:314px">0</div>
<div class="cell" style="left:366px;top:314px">0 р.</div>
<div class="cell" style="left:429px;top:314px">15</div>
<div class="cell" style="left:492px;top:314px">38 926 р.</div>
<div class="cell" style="left:555px;top:314px">0</div>
<div class="cell" style="left:618px;top:314px">0 р.</div>
<div class="cell" style="left:681px;top:314px">0</div>
<div class="cell" style="left:744px;top:314px">0 р.</div>
<div class="cell" style="left:807px;top:314px">0</div>
<div class="cell" style="left:870px;top:314px">0 р.</div>
<div class="abs" style="left:107px;top:314px;width:1px;height:16px;background:#f4f4f4"></div>
<div class="row" style="left:0px;top:348px;width:54px;background:#0070d9"></div>
<div class="row" style="left:55px;top:348px;width:52px;background:#0070d9"></div>
<div class="row" style="left:108px;top:348px;width:52px;background:#0070d9"></div>
<div class="row" style="left:161px;top:348px;width:73px;background:#0070d9"></div>
<div class="row" style="left:235px;top:348px;width:62px;background:#0070d9"></div>
<div class="row" style="left:298px;top:348px;width:62px;background:#0070d9"></div>
<div class="row" style="left:361px;top:348px;width:62px;background:#0070d9"></div>
<div class="row" style="left:424px;top:348px;width:62px;background:#0070d9"></div>
<div class="row" style="left:487px;top:348px;width:62px;background:#0070d9"></div>
<div class="row" style="left:550px;top:348px;width:62px;background:#0070d9"></div>
<div class="row" style="left:613px;top:348px;width:62px;background:#0070d9"></div>
<div class="row" style="left:676px;top:348px;width:62px;background:#0070d9"></div>
<div class="row" style="left:739px;top:348px;width:62px;background:#0070d9"></div>
<div class="row" style="left:802px;top:348px;width:62px;background:#0070d9"></div>
<div class="row" style="left:865px;top:348px;width:62px;background:#0070d9"></div>
<div class="cell" style="left:4px;top:348px">Футболки, рубашки</div>
<div class="abs" style="left:54px;top:348px;width:1px;height:16px;background:#f4f4f4"></div>
<div class="abs" style="left:107px;top:348px;width:1px;height:16px;background:#f4f4f4"></div>
<div class="abs" style="left:160px;top:348px;width:1px;height:16px;background:#f4f4f4"></div>
<div class="abs" style="left:234px;top:348px;width:1px;height:16px;background:#f4f4f4"></div>
<div class="abs" style="left:297px;top:348px;width:1px;height:16px;background:#f4f4f4"></div>
<div class="abs" style="left:360px;top:348px;width:1px;height:16px;background:#f4f4f4"></div>
<div class="abs" style="left:423px;top:348px;width:1px;height:16px;background:#f4f4f4"></div>
<div class="abs" style="left:486px;top:348px;width:1px;height:16px;background:#f4f4f4"></div>
<div class="abs" style="left:549px;top:348px;width:1px;height:16px;background:#f4f4f4"></div>
<div class="abs" style="left:612px;top:348px;width:1px;height:16px;background:#f4f4f4"></div>
<div class="abs" style="left:675px;top:348px;width:1px;height:16px;background:#f4f4f4"></div>
<div class="abs" style="left:738px;top:348px;width:1px;height:16px;background:#f4f4f4"></div>
<div class="abs" style="left:801px;top:348px;width:1px;height:16px;background:#f4f4f4"></div>
<div class="abs" style="left:864px;top:348px;width:1px;height:16px;background:#f4f4f4"></div>
<div class="cell" style="left:7px;top:365px">10054</div>
<div class="cell" style="left:166px;top:365px">Блузка</div>
<div class="cell" style="left:240px;top:365px">23</div>
<div class="cell" style="left:303px;top:365px">0</div>
<div class="cell" style="left:366px;top:365px">0 р.</div>
<div class="cell" style="left:429px;top:365px">1</div>
<div class="cell" style="left:492px;top:365px">999 р.</div>
<div class="cell" style="left:555px;top:365px">0</div>
<div class="cell" style="left:618px;top:365px">0 р.</div>
<div class="cell" style="left:681px;top:365px">0</div>
<div class="cell" style="left:744px;top:365px">0 р.</div>
<div class="cell" style="left:807px;top:365px">0</div>
<div class="cell" style="left:870px;top:365px">0 р.</div>
<div class="cell" style="left:7px;top:382px">10055</div>
<div class="cell" style="left:166px;top:382px">Футболка</div>
<div class="cell" style="left:240px;top:382px">-7</div>
<div class="cell" style="left:303px;top:382px">0</div>
<div class="cell" style="left:366px;top:382px">0 р.</div>
<div class="cell" style="left:429px;top:382px">8</div>
<div class="cell" style="left:492px;top:382px">8 479 р.</div>
<div class="cell" style="left:555px;top:382px">0</div>
<div class="cell" style="left:618px;top:382px">0 р.</div>
<div class="cell" style="left:681px;top:382px">1</div>
<div class="cell" style="left:744px;top:382px">1 323 р.</div>
<div class="cell" style="left:807px;top:382px">0</div>
<div class="cell" style="left:870px;top:382px">0 р.</div>
<div class="cell" style="left:7px;top:399px">10056</div>
<div class="cell" style="left:166px;top:399px">Футболка</div>
<div class="cell" style="left:240px;top:399px">12</div>
<div class="cell" style="left:303px;top:399px">0</div>
<div class="cell" style="left:366px;top:399px">0 р.</div>
<div class="cell" style="left:429px;top:399px">6</div>
<div class="cell" style="left:492px;top:399px">5 455 р.</div>
<div class="cell" style="left:555px;top:399px">0</div>
<div class="cell" style="left:618px;top:399px">0 р.</div>
<div class="cell" style="left:681px;top:399px">0</div>
<div class="cell" style="left:744px;top:399px">0 р.</div>
<div class="cell" style="left:807px;top:399px">0</div>
<div class="cell" style="left:870px;top:399px">0 р.</div>
<div class="abs" style="left:939px;top:1px;width:17px;height:416px;background:linear-gradient(90deg,#e3e3e3,#efefef 3px,#f0f0f0)"></div>
<div class="abs" style="left:944px;top:7px;width:8px;height:5px"><svg width="8" height="5" viewBox="0 0 8 5" style="position:absolute;left:0;top:0;"><path d="M0.5,4.5 L4,0.8 L7.5,4.5 Z" fill="#454545"/></svg></div>
<div class="abs" style="left:944px;top:406px;width:8px;height:5px"><svg width="8" height="5" viewBox="0 0 8 5" style="position:absolute;left:0;top:0;"><path d="M0.5,0.5 L4,4.2 L7.5,0.5 Z" fill="#454545"/></svg></div>
<div class="abs" style="left:939px;top:126px;width:15px;height:83px;border:1px solid #979797;border-radius:2px;background:linear-gradient(90deg,#f6f6f6,#e9e9e9 50%,#d6d6d6 60%,#dcdcdc)"></div>
<div class="abs" style="left:944px;top:163px;width:7px;height:1px;background:#333;box-shadow:0 3px 0 #333,0 6px 0 #333"></div>
<div class="abs" style="left:906px;top:385px;width:30px;height:30px"><svg width="30" height="30" viewBox="0 0 30 30" style="position:absolute;left:0;top:0;"><defs><linearGradient id="xg" x1="0" y1="0" x2="0" y2="1"><stop offset="0" stop-color="#72c83c"/><stop offset=".45" stop-color="#4aa82a"/><stop offset=".55" stop-color="#2a8422"/><stop offset="1" stop-color="#17651a"/></linearGradient></defs><rect x="0.5" y="0.5" width="29" height="29" rx="3" fill="#ececec" stroke="#d9d9d9"/><rect x="3" y="3" width="24" height="24" fill="#f4f4f4"/><rect x="3.5" y="3" width=".8" height="24" fill="#d2d2d2"/><rect x="7.9" y="3" width=".8" height="24" fill="#d2d2d2"/><rect x="15.5" y="3" width=".8" height="24" fill="#d2d2d2"/><rect x="20" y="3" width=".8" height="24" fill="#d2d2d2"/><rect x="26.5" y="3" width=".8" height="24" fill="#d2d2d2"/><rect x="3" y="3" width="24" height=".7" fill="#dadada"/><rect x="3" y="6.6" width="24" height=".7" fill="#dadada"/><rect x="3" y="10" width="24" height=".7" fill="#dadada"/><rect x="3" y="12.6" width="24" height=".7" fill="#dadada"/><rect x="3" y="15" width="24" height=".7" fill="#dadada"/><rect x="3" y="18" width="24" height=".7" fill="#dadada"/><rect x="3" y="21" width="24" height=".7" fill="#dadada"/><rect x="3" y="23.5" width="24" height=".7" fill="#dadada"/><rect x="3" y="26" width="24" height=".7" fill="#dadada"/><path d="M10.5,14 H17.5 L20.2,17.8 L23,14 H29.8 L24,21.6 L29.8,29.6 H22.6 L20,25.6 L17.3,29.6 H10.5 L16.3,21.6 Z" fill="url(#xg)"/></svg></div>
</div>
<div class="t" style="left:686px;top:529px;line-height:16px">72</div>
<div class="t" style="left:749px;top:529px;line-height:16px">362 656 р.</div>
<div class="t" style="left:812px;top:529px;line-height:16px">194</div>
<div class="t" style="left:875px;top:529px;line-height:16px">360 823 р.</div>
<div class="t" style="left:938px;top:529px;line-height:16px">0</div>
<div class="t" style="left:1001px;top:529px;line-height:16px">0 р.</div>
<div class="t" style="left:1064px;top:529px;line-height:16px">10</div>
<div class="t" style="left:1127px;top:529px;line-height:16px">24 339 р.</div>
<div class="t" style="left:1190px;top:529px;line-height:16px">0</div>
<div class="t" style="left:1253px;top:529px;line-height:16px">0 р.</div>
<div class="cb" style="left:32px;top:533px"><svg width="13" height="13" viewBox="0 0 13 13" style="position:absolute;left:0;top:0;"><rect x="0.5" y="0.5" width="12" height="12" fill="#fff" stroke="#8e8f8f"/><defs><linearGradient id="cbg" x1="0" y1="0" x2="1" y2="1"><stop offset="0" stop-color="#cbcbcb"/><stop offset="1" stop-color="#f3f3f3"/></linearGradient></defs><rect x="2" y="2" width="9" height="9" fill="url(#cbg)"/><path d="M3.4,6.6 L5.6,9.3 L9.8,2.2" fill="none" stroke="#3a55a4" stroke-width="1.7" stroke-linejoin="round" stroke-linecap="round"/></svg></div>
<div class="t" style="left:47px;top:534px">Отметить\отменить все</div>
<div class="abs" style="left:32px;top:548px;width:405px;height:70px;background:#fff"></div><div class="abs" style="left:33px;top:549px;width:404px;height:69px;background:#fff;border:1px solid #a0a0a0"></div>
<div class="t" style="left:45px;top:562px">с</div>
<div class="t" style="left:45px;top:594px">по</div>
<div class="abs" style="left:64px;top:557px;width:81px;height:21px;border:1px solid #d9d9d9;border-radius:2px;background:#fff"></div>
<div class="t" style="left:66px;top:562px">01.07.2015</div>
<div class="abs" style="left:133px;top:566px;width:0;height:0;border-left:4px solid transparent;border-right:4px solid transparent;border-top:4px solid #000"></div>
<div class="abs" style="left:64px;top:589px;width:81px;height:21px;border:1px solid #d9d9d9;border-radius:2px;background:#fff"></div>
<div class="t" style="left:66px;top:594px">01.08.2015</div>
<div class="abs" style="left:133px;top:598px;width:0;height:0;border-left:4px solid transparent;border-right:4px solid transparent;border-top:4px solid #000"></div>
<div class="t" style="left:143px;width:80px;text-align:center;top:558px">Январь</div>
<div class="t" style="left:213px;width:80px;text-align:center;top:558px">Февраль</div>
<div class="t" style="left:283px;width:80px;text-align:center;top:558px">Март</div>
<div class="t" style="left:353px;width:80px;text-align:center;top:558px">Апрель</div>
<div class="t" style="left:143px;width:80px;text-align:center;top:579px">Май</div>
<div class="t" style="left:213px;width:80px;text-align:center;top:579px">Июнь</div>
<div class="t" style="left:283px;width:80px;text-align:center;top:579px">Июль</div>
<div class="t" style="left:353px;width:80px;text-align:center;top:579px">Август</div>
<div class="t" style="left:143px;width:80px;text-align:center;top:598px">Сентябрь</div>
<div class="t" style="left:213px;width:80px;text-align:center;top:598px">Октябрь</div>
<div class="t" style="left:283px;width:80px;text-align:center;top:598px">Ноябрь</div>
<div class="t" style="left:353px;width:80px;text-align:center;top:598px">Декабрь</div>
<div class="abs" style="left:1149px;top:549px;width:178px;height:68px;border:1px solid #707070;border-radius:3px;background:linear-gradient(#f3f3f3 0,#ececec 31px,#dcdcdc 32px,#d2d2d2 62px,#d8d8d8 100%)"></div>
<div class="abs" style="left:1159px;top:559px;width:48px;height:48px"><svg width="48" height="48" viewBox="0 0 48 48" style="position:absolute;left:0;top:0;"><defs><linearGradient id="rg" x1="0" y1="0" x2="0" y2="1"><stop offset="0" stop-color="#46a518"/><stop offset=".35" stop-color="#6cbc38"/><stop offset=".55" stop-color="#8ccc50"/><stop offset=".7" stop-color="#a8dc60"/><stop offset="1" stop-color="#b2e26a"/></linearGradient></defs><rect x="0.5" y="0.5" width="47" height="47" rx="5" fill="url(#rg)" stroke="#3e9a16"/><path d="M9.5,22 Q14,9 29,10.5 L30,4.5 L38.5,16 L29.5,22.5 L29.5,17 Q17,15.5 9.5,22 Z" fill="#f4f4f4"/><path d="M38.5,26 Q34,39 18.5,37.5 L18.5,43.5 L9.5,31 L19,25 L19,31 Q31,32 38.5,26 Z" fill="#f4f4f4"/></svg></div>
<div class="t" style="left:1241px;top:577px;font-size:12.3px;line-height:14px">Обновить</div>
<div class="abs" style="left:8px;top:634px;width:1344px;height:88px;background:linear-gradient(#b9dcfc,#f6faff)"></div>
<div class="tb" style="left:8px;">
<div class="ic"><svg width="56" height="56" viewBox="0 0 56 56" style="position:absolute;left:0;top:0;"><rect x="0.5" y="0.5" width="55" height="55" rx="5" fill="#afd3f6" stroke="#9cc5ec"/><rect x="6" y="4" width="13" height="17" fill="#c4e2fd" opacity=".8"/><rect x="29" y="4" width="23" height="17" rx="2" fill="#95bbdf"/><rect x="1" y="25" width="54" height="1" fill="#9cc5ec"/><rect x="4" y="29" width="9" height="6.5" rx="2" fill="#acd1f5" stroke="#9dc4ea" stroke-width=".8"/><rect x="16" y="29" width="9" height="6.5" rx="2" fill="#acd1f5" stroke="#9dc4ea" stroke-width=".8"/><rect x="30" y="29" width="9" height="6.5" rx="2" fill="#acd1f5" stroke="#9dc4ea" stroke-width=".8"/><rect x="44" y="29" width="9" height="6.5" rx="2" fill="#acd1f5" stroke="#9dc4ea" stroke-width=".8"/><rect x="4" y="38" width="9" height="6.5" rx="2" fill="#acd1f5" stroke="#9dc4ea" stroke-width=".8"/><rect x="16" y="38" width="9" height="6.5" rx="2" fill="#acd1f5" stroke="#9dc4ea" stroke-width=".8"/><rect x="30" y="38" width="9" height="6.5" rx="2" fill="#acd1f5" stroke="#9dc4ea" stroke-width=".8"/><rect x="44" y="38" width="9" height="6.5" rx="2" fill="#acd1f5" stroke="#9dc4ea" stroke-width=".8"/><rect x="4" y="47" width="9" height="6.5" rx="2" fill="#acd1f5" stroke="#9dc4ea" stroke-width=".8"/><rect x="16" y="47" width="9" height="6.5" rx="2" fill="#acd1f5" stroke="#9dc4ea" stroke-width=".8"/><rect x="30" y="47" width="9" height="6.5" rx="2" fill="#acd1f5" stroke="#9dc4ea" stroke-width=".8"/><rect x="44" y="47" width="9" height="6.5" rx="2" fill="#acd1f5" stroke="#9dc4ea" stroke-width=".8"/></svg></div>
<div class="lb" style="top:70px">Рабочее место</div>
</div>
<div class="tb" style="left:129px;">
<div class="ic"><svg width="56" height="56" viewBox="0 0 56 56" style="position:absolute;left:0;top:0;"><rect x="0.5" y="3" width="55" height="52.5" rx="5" fill="#b8dbfc" stroke="#9cc5ec"/><path d="M0.5,11 V8 Q0.5,3 5.5,3 H50.5 Q55.5,3 55.5,8 V11 Z" fill="#a4c9ee"/><rect x="9" y="11" width="1" height="44" fill="#a6cbee"/><rect x="7.5" y="1" width="3" height="5" rx="1.5" fill="#d4ebfe"/><rect x="20.5" y="1" width="3" height="5" rx="1.5" fill="#d4ebfe"/><rect x="33.5" y="1" width="3" height="5" rx="1.5" fill="#d4ebfe"/><rect x="44.5" y="1" width="3" height="5" rx="1.5" fill="#d4ebfe"/><rect x="1" y="15" width="54" height=".6" fill="#a9cdf0"/><rect x="1" y="18" width="54" height=".6" fill="#a9cdf0"/><rect x="1" y="21" width="54" height=".6" fill="#a9cdf0"/><rect x="1" y="24" width="54" height=".6" fill="#a9cdf0"/><rect x="1" y="27" width="54" height=".6" fill="#a9cdf0"/><rect x="1" y="30" width="54" height=".6" fill="#a9cdf0"/><rect x="1" y="33" width="54" height=".6" fill="#a9cdf0"/><rect x="1" y="36" width="54" height=".6" fill="#a9cdf0"/><rect x="1" y="39" width="54" height=".6" fill="#a9cdf0"/><rect x="1" y="42" width="54" height=".6" fill="#a9cdf0"/><rect x="1" y="45" width="54" height=".6" fill="#a9cdf0"/><rect x="1" y="48" width="54" height=".6" fill="#a9cdf0"/><rect x="1" y="51" width="54" height=".6" fill="#a9cdf0"/><path d="M20,48 L23,40 L43,20 Q46,18 48,20 Q50,23 47,25 L27,45 Z" fill="#a0c6ea"/><path d="M39,24 L44,19 Q46,18 48,20 Q50,23 47,25 L43,29 Z" fill="#bcdefc"/></svg></div>
<div class="lb" style="top:70px">Текущая смена</div>
</div>
<div class="tb" style="left:250px;">
<div class="ic"><svg width="56" height="56" viewBox="0 0 56 56" style="position:absolute;left:0;top:0;"><rect x="0.5" y="2" width="55" height="53" rx="2" fill="#95bde3" stroke="#a3c9ee"/><rect x="7" y="3" width="1" height="51" fill="#a6c9eb" opacity=".6"/><rect x="15" y="3" width="1" height="51" fill="#a6c9eb" opacity=".6"/><rect x="22" y="3" width="1" height="51" fill="#a6c9eb" opacity=".6"/><rect x="30" y="3" width="1" height="51" fill="#a6c9eb" opacity=".6"/><rect x="33" y="0" width="10" height="52" fill="#9ac0e5"/><path d="M35,6 Q38,4 41,6 V22 L38,18 L35,22 Z" fill="#a9cdf0"/></svg></div>
<div class="lb" style="top:70px">Отчет по сменам</div>
</div>
<div class="tb" style="left:371px;">
<div class="ic"><svg width="56" height="56" viewBox="0 0 56 56" style="position:absolute;left:0;top:0;"><rect x="0.5" y="0.5" width="55" height="55" rx="5" fill="#b2d7f9" stroke="#9cc5ec"/><rect x="4.5" y="4.5" width="47" height="47" rx="4" fill="#b9ddfc" stroke="#a0c8ee"/><circle cx="27" cy="28" r="9" fill="none" stroke="#9cc4ea" stroke-width="2.5"/><circle cx="27" cy="28" r="5" fill="none" stroke="#a8ceef" stroke-width="1.2"/><rect x="44.5" y="19" width="3" height="19" rx="1" fill="#c4e2fd" stroke="#9fc6ec" stroke-width=".8"/><rect x="4" y="13" width="2" height="5" fill="#a0c6ea"/><rect x="4" y="38" width="2" height="5" fill="#a0c6ea"/></svg></div>
<div class="lb" style="top:70px">Денежные средства</div>
</div>
<div class="tb" style="left:492px;">
<div class="ic"><svg width="56" height="56" viewBox="0 0 56 56" style="position:absolute;left:0;top:0;"><rect x="0.5" y="0.5" width="55" height="55" rx="5" fill="#b2d7f9" stroke="#a8cff4"/><rect x="12" y="5" width="31" height="43" fill="#c0e0fd"/><rect x="10" y="47" width="35" height="4" fill="#bbdcfb"/><rect x="15" y="10" width="3" height=".7" fill="#aed1f1"/><rect x="30" y="10" width="11" height=".7" fill="#b0d2f1"/><rect x="15" y="15" width="3" height=".7" fill="#aed1f1"/><rect x="30" y="15" width="11" height=".7" fill="#b0d2f1"/><rect x="15" y="20" width="3" height=".7" fill="#aed1f1"/><rect x="30" y="20" width="11" height=".7" fill="#b0d2f1"/><rect x="15" y="25" width="3" height=".7" fill="#aed1f1"/><rect x="30" y="25" width="11" height=".7" fill="#b0d2f1"/><rect x="15" y="30" width="3" height=".7" fill="#aed1f1"/><rect x="30" y="30" width="11" height=".7" fill="#b0d2f1"/><rect x="15" y="35" width="3" height=".7" fill="#aed1f1"/><rect x="30" y="35" width="11" height=".7" fill="#b0d2f1"/><rect x="15" y="39" width="3" height=".7" fill="#aed1f1"/><rect x="30" y="39" width="11" height=".7" fill="#b0d2f1"/><rect x="15" y="42" width="12" height="3" fill="#add0f0"/><rect x="35" y="42" width="7" height="3" fill="#add0f0"/></svg></div>
<div class="lb" style="top:70px">Движение товара</div>
</div>
<div class="tb" style="left:613px;">
<div class="ic"><svg width="56" height="56" viewBox="0 0 56 56" style="position:absolute;left:0;top:0;"><rect x="0.5" y="0.5" width="55" height="55" rx="5" fill="#b3d7fa" stroke="#a6caec"/><rect x="24" y="1" width="7" height="13" fill="#c0e0fd"/><path d="M26.5,44 Q31,37.5 35.5,44 Z" fill="#a4c7e6"/><rect x="30.5" y="43" width="1" height="7" fill="#a4c7e6"/><circle cx="45.5" cy="44.5" r="4.6" fill="none" stroke="#a9cbea" stroke-width="1.8" stroke-dasharray="6 2"/></svg></div>
<div class="lb" style="top:70px">Товар и услуги</div>
</div>
<div class="tb" style="left:734px;">
<div class="ic"><svg width="56" height="56" viewBox="0 0 56 56" style="position:absolute;left:0;top:0;"><rect x="0.5" y="0.5" width="55" height="55" rx="5" fill="#a9cff2" stroke="#a0c8ee"/><path d="M0.5,5.5 Q0.5,0.5 5.5,0.5 H15 V55.5 H5.5 Q0.5,55.5 0.5,50.5 Z" fill="#9fc6ec"/><rect x="44" y="1" width="11" height="54" fill="#b4d8fa"/><rect x="2" y="9" width="6" height="3" rx="1" fill="#c6e3fd"/><rect x="2" y="21" width="6" height="3" rx="1" fill="#c6e3fd"/><rect x="2" y="33" width="6" height="3" rx="1" fill="#c6e3fd"/><rect x="2" y="45" width="6" height="3" rx="1" fill="#c6e3fd"/><rect x="44" y="14" width="11" height=".8" fill="#a2c8ec"/><rect x="44" y="27" width="11" height=".8" fill="#a2c8ec"/><rect x="44" y="45" width="11" height=".8" fill="#a2c8ec"/><path d="M19,18 Q21,14 24,17 L27,23 Q27,26 25,27 Q28,33 33,36 Q35,34 37,35 L42,39 Q43,42 40,44 Q30,45 22,34 Q17,26 19,18 Z" fill="#bcdffd"/></svg></div>
<div class="lb" style="top:70px">Контрагенты</div>
</div>
<div class="tb" style="left:855px;background:#92b8e2;border:1px solid #5f93cf;">
<div class="ic" style="left:31px;top:7px"><svg width="56" height="56" viewBox="0 0 56 56" style="position:absolute;left:0;top:0;"><defs><linearGradient id="dg" x1="0" y1="0" x2="0" y2="1"><stop offset="0" stop-color="#ffe044"/><stop offset=".5" stop-color="#fcc430"/><stop offset="1" stop-color="#f8a61c"/></linearGradient><linearGradient id="df" x1="0" y1="0" x2="0" y2="1"><stop offset="0" stop-color="#f8a820"/><stop offset="1" stop-color="#fde050"/></linearGradient></defs><rect x="0.5" y="0.5" width="55" height="55" rx="6" fill="url(#dg)" stroke="#eaa21c"/><path d="M7,12 H49 L47,27 H9 Z" fill="#c88a2c"/><path d="M10,27 L12,14 H44 L46,27 Z" fill="#f8f8f8"/><rect x="11" y="17" width="34" height=".8" fill="#bbb"/><rect x="11" y="20" width="34" height=".8" fill="#bbb"/><rect x="10.5" y="23" width="35" height=".8" fill="#bbb"/><path d="M5,26 Q4,24 7,24 H49 Q52,24 51,26 L48,45 Q47,48 44,48 H12 Q9,48 8,45 Z" fill="url(#df)" stroke="#e8a020" stroke-width=".8"/><rect x="16" y="34" width="23" height="3" rx="1" fill="#d08a2a"/></svg></div>
<div class="lb" style="top:69px">Отчеты</div>
</div>
<div class="tb" style="left:976px;">
<div class="ic"><svg width="56" height="56" viewBox="0 0 56 56" style="position:absolute;left:0;top:0;"><rect x="0.5" y="0.5" width="55" height="55" rx="5" fill="#b9ddfc" stroke="#a9d0f4"/><path d="M1.5,37 L9,27.5 L55,46 V52 Q55,55.5 52,55.5 L50,55.5 Z" fill="#acd2f5" stroke="#9cc4ea" stroke-width=".8"/><circle cx="10" cy="33" r="2.5" fill="#c4e2fd" stroke="#9cc4ea" stroke-width=".8"/><path d="M24,27 L45,4 Q47,2 49,4 Q51,6 49,8 L28,31 L23,33 Z" fill="#a4cbee"/><path d="M43,6 L45,4 Q47,2 49,4 Q51,6 49,8 L47,10 Z" fill="#c2e1fd"/></svg></div>
<div class="lb" style="top:70px">Действия</div>
</div>
<div class="tb" style="left:1097px;">
<div class="ic"><svg width="56" height="56" viewBox="0 0 56 56" style="position:absolute;left:0;top:0;"><rect x="0.5" y="0.5" width="55" height="55" rx="5" fill="#b8dcfc" stroke="#a4caee"/><rect x="16" y="2" width="21" height="21" fill="#a6ccf0"/><rect x="1" y="18" width="15" height="18" fill="#b2d7f9"/><rect x="31" y="14" width="24" height="26" fill="#a9cef1"/><rect x="19" y="36" width="12" height="19" fill="#c2e2fd"/><rect x="1" y="37" width="18" height="18" fill="#b0d4f6"/><path d="M37,24 L41,33 L48,20" fill="none" stroke="#c8e5fd" stroke-width="3"/></svg></div>
<div class="lb" style="top:70px">Настройки</div>
</div>
<div class="tb" style="left:1218px;">
<div class="ic"><svg width="56" height="56" viewBox="0 0 56 56" style="position:absolute;left:0;top:0;"><rect x="0.5" y="0.5" width="55" height="55" rx="5" fill="#b2d7f9" stroke="#a2c9ee"/><circle cx="28.4" cy="18" r="7.5" fill="#98bfe4"/><path d="M24.5,21 H32.3 L34.5,47 H21.5 Z" fill="#98bfe4"/></svg></div>
<div class="lb" style="top:70px">Заблокировать</div>
</div>
</body></html>
